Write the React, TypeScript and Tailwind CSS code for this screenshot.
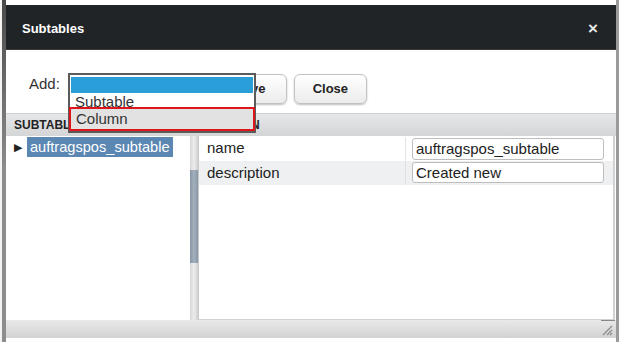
import React from "react";

export default function App() {
  const font = { fontFamily: '"Liberation Sans", Arial, sans-serif' };
  return (
    <div className="relative w-[621px] h-[342px] bg-white overflow-hidden flex" style={font}>
      <div className="w-[2px] h-full bg-[#f4f4f4]" />
      <div className="w-[4px] h-full bg-gradient-to-b from-[#4a4a4a] via-[#8d8d8d] to-[#8d8d8d]" />
      <div className="w-[610px] h-full flex flex-col">
        {/* header */}
        <div className="mt-[5px] h-[45px] bg-[#212427] flex items-center justify-between pl-[16px] pr-[18px] pt-[3px] border-b border-[#3a3a3a]">
          <span className="text-white font-bold text-[13px]">Subtables</span>
          <span className="text-[#e8e8e8] font-bold text-[17px] leading-none">×</span>
        </div>
        {/* toolbar */}
        <div className="h-[63px] flex items-start pt-[23px]">
          <span className="ml-[23px] text-[15px] text-[#333] leading-none mt-[3px]">Add:</span>
          <div className="ml-[154px] flex gap-[7px] mt-[1px]">
            <button className="w-[73px] h-[30px] rounded-[6px] border border-[#c2c2c2] bg-gradient-to-b from-white to-[#ececec] shadow-[0_1px_2px_rgba(0,0,0,0.25)] text-[13px] font-bold text-[#222]">
              Save
            </button>
            <button className="w-[73px] h-[30px] rounded-[6px] border border-[#c2c2c2] bg-gradient-to-b from-white to-[#ececec] shadow-[0_1px_2px_rgba(0,0,0,0.25)] text-[13px] font-bold text-[#222]">
              Close
            </button>
          </div>
        </div>
        {/* section header bar */}
        <div className="h-[23px] flex items-center bg-gradient-to-b from-[#e6e7e8] to-[#d4d5d6] border-t border-[#d0d0d0]">
          <span className="w-[193px] pl-[8px] text-[12px] font-bold text-[#222]">SUBTABLES</span>
          <span className="pl-[8px] text-[12px] font-bold text-[#222]">COLUMN</span>
        </div>
        {/* content */}
        <div className="h-[184px] flex">
          <div className="w-[184px] bg-white pt-[1px]">
            <div className="flex items-center h-[20px]">
              <span className="ml-[8px] w-[13px] text-[11px] leading-none text-[#222]">▶</span>
              <span className="h-[20px] px-[3px] bg-[#5b87b3] text-white text-[14.6px] leading-[20px]">
                auftragspos_subtable
              </span>
            </div>
          </div>
          <div className="w-[8px] flex flex-col bg-gradient-to-r from-[#d6d6d6] via-[#ececec] to-[#d0d0d0]">
            <div className="h-[34px]" />
            <div className="h-[93px] bg-gradient-to-r from-[#8796a6] via-[#a3b0bd] to-[#8796a6]" />
          </div>
          <div className="w-[1px] bg-[#c9c9c9]" />
          <div className="flex-1 flex flex-col border-r-2 border-b border-[#d2d2d2] mr-[1px]">
            <div className="h-[1px]" />
            <div className="flex h-[24px] bg-white">
              <div className="w-[207px] border-r border-[#e4e4e4] pl-[8px] text-[15px] leading-[22px] text-[#222]">name</div>
              <div className="pl-[6px] pt-[1px]">
                <div className="w-[192px] h-[22px] rounded-[3px] border border-[#bdbdbd] bg-white pl-[3px] text-[15px] leading-[20px] text-[#222]">
                  auftragspos_subtable
                </div>
              </div>
            </div>
            <div className="flex h-[24px] bg-[#eff0f1]">
              <div className="w-[207px] border-r border-[#e0e0e0] pl-[8px] text-[15px] leading-[24px] text-[#222]">description</div>
              <div className="pl-[6px] pt-[1px]">
                <div className="w-[192px] h-[21px] rounded-[3px] border border-[#bdbdbd] bg-white pl-[3px] text-[15px] leading-[19px] text-[#222]">
                  Created new
                </div>
              </div>
            </div>
            <div className="flex-1 bg-white" />
          </div>
        </div>
        {/* footer */}
        <div className="relative h-[18px] bg-gradient-to-b from-[#e9e9e9] to-[#d2d2d2]">
          <div className="absolute right-[1px] top-0 w-[14px] h-[1px] bg-[#888]" />
          <svg className="absolute right-[3px] bottom-[2px]" width="11" height="11" viewBox="0 0 11 11">
            <path d="M1 10 L10 1 M5 10 L10 5 M8 10 L10 8" stroke="#8a8a8a" strokeWidth="1.2" />
          </svg>
        </div>
        <div className="flex-1 bg-white" />
      </div>
      <div className="w-[3px] h-full bg-[#9a9a9a]" />
      <div className="flex-1 bg-white" />

      {/* dropdown overlay */}
      <div className="absolute left-[68px] top-[73px] w-[188px] h-[60px] border-2 border-[#5b5b5b] bg-white">
        <div className="mt-[2px] mx-[1px] h-[16px] bg-[#2a9ed9]" />
        <div className="h-[14px] pl-[5px] text-[15px] leading-[18px] text-[#333] overflow-hidden">Subtable</div>
        <div className="h-[24px] -mx-[1px] border-2 border-[#e0141b] bg-[#e2e2e2] pl-[5px] text-[15px] leading-[20px] text-[#333]">
          Column
        </div>
      </div>
    </div>
  );
}
